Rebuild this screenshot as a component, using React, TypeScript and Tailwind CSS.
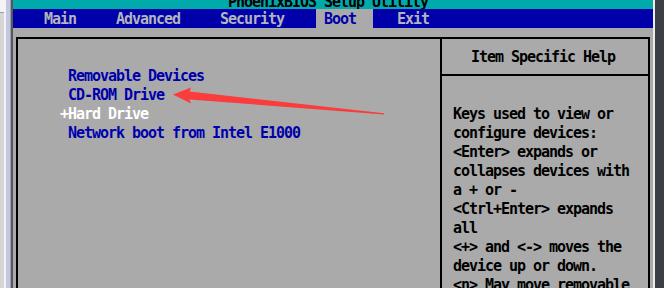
import React from 'react';

const tabs = [
  { label: 'Main', ml: 'ml-[31px]' },
  { label: 'Advanced', ml: 'ml-[40px]' },
  { label: 'Security', ml: 'ml-[40px]' },
];

const bootItems = [
  { text: ' Removable Devices', white: false },
  { text: ' CD-ROM Drive', white: false },
  { text: '+Hard Drive', white: true },
  { text: ' Network boot from Intel E1000', white: false },
];

const helpLines = [
  'Keys used to view or',
  'configure devices:',
  '<Enter> expands or',
  'collapses devices with',
  'a + or -',
  '<Ctrl+Enter> expands',
  'all',
  '<+> and <-> moves the',
  'device up or down.',
  '<n> May move removable',
];

const App: React.FC = () => {
  return (
    <div className="relative flex h-[288px] w-[664px] overflow-hidden bg-[#aaaaaa] font-['DejaVu_Sans_Mono',monospace] text-[15px] font-bold leading-[19px] tracking-[-1.03px]">
      {/* window frame on the left */}
      <div className="flex w-[13px] shrink-0">
        <div className="flex w-[4px] flex-col bg-[#d6d6d6]">
          <div className="h-[13px] border-b border-[#9a9a9a] bg-[#f4f4f4]" />
        </div>
        <div className="w-[2px] bg-[#f2f3f8]" />
        <div className="w-[4px] bg-[#c3c8de]" />
        <div className="w-[1px] bg-[#9d9fae]" />
        <div className="w-[2px] bg-[#55575f]" />
      </div>

      <div className="flex h-[288px] w-[640px] shrink-0 flex-col">
        <div className="h-[9px] shrink-0 overflow-hidden bg-[#00aaaa]">
          <div className="mt-[-7px] whitespace-pre pl-[215px] text-black">PhoenixBIOS Setup Utility</div>
        </div>

        <div className="flex h-[19px] shrink-0 bg-[#0000aa] pt-[1px] leading-[18px] text-[#b4b4bc]">
          {tabs.map((t) => (
            <span key={t.label} className={t.ml}>{t.label}</span>
          ))}
          <span className="ml-[32px] mt-[-1px] bg-[#aaaaaa] pl-[8px] pr-[17px] pt-[1px] text-[#0000aa]">Boot</span>
          <span className="ml-[24px]">Exit</span>
        </div>

        <div className="mx-[3px] mt-[9px] flex min-h-0 flex-1 overflow-hidden border-2 border-b-0 border-black">
          <div className="w-[422px] shrink-0 pl-[42px] pt-[28px]">
            {bootItems.map((item) => (
              <div key={item.text} className={`whitespace-pre ${item.white ? 'text-white' : 'text-[#0000aa]'}`}>
                {item.text}
              </div>
            ))}
          </div>
          <div className="flex-1 border-l-2 border-black text-black">
            <div className="flex h-[37px] items-center justify-center border-b-2 border-black pr-[4px] pt-[2px]">
              Item Specific Help
            </div>
            <div className="pl-[11px] pt-[29px]">
              {helpLines.map((line) => (
                <div key={line} className="whitespace-pre">{line}</div>
              ))}
            </div>
          </div>
        </div>
      </div>

      {/* window frame on the right */}
      <div className="flex flex-1">
        <div className="w-[2px] bg-[#ececec]" />
        <div className="flex-1 bg-[#3b3f45]" />
      </div>

      {/* annotation arrow */}
      <svg className="pointer-events-none absolute left-0 top-0" width="664" height="288" viewBox="0 0 664 288">
        <polygon
          points="173,94.5 191,87.5 189.5,91.5 384,113.2 384,114.4 189.5,99.5 191,103.5"
          fill="#fa3c3c"
        />
      </svg>
    </div>
  );
};

export default App;
